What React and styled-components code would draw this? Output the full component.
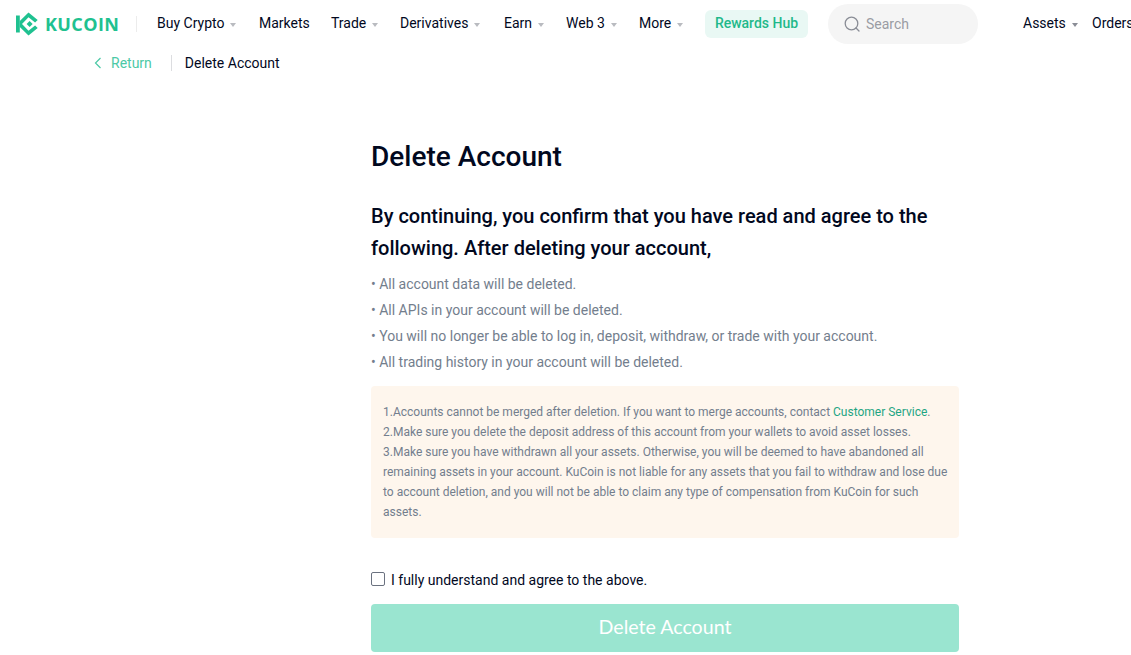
import React from 'react';
import styled, { createGlobalStyle } from 'styled-components';

const Global = createGlobalStyle`
  html, body { margin: 0; padding: 0; background: #fff; overflow: hidden; }
  body { font-family: Roboto, "Liberation Sans", sans-serif; color: #01081e; }
  * { box-sizing: border-box; }
`;

const Page = styled.div`
  width: 1131px;
  height: 655px;
  overflow: hidden;
`;

const Header = styled.header`
  display: flex;
  align-items: center;
  width: 1200px;
  height: 48px;
  padding-left: 16px;
  white-space: nowrap;
`;

const Logo = styled.div`
  display: flex;
  flex-shrink: 0;
  align-items: center;
  gap: 7px;
  width: 102px;
  color: #1fc190;
  svg { flex-shrink: 0; }
`;

const LogoText = styled.span`
  font-family: "Open Sans", sans-serif;
  font-size: 18px;
  font-weight: 700;
  letter-spacing: 0.4px;
  line-height: 1;
`;

const Divider = styled.span`
  flex-shrink: 0;
  width: 1px;
  height: 16px;
  background: #ececec;
  margin: 0 20px 0 18px;
`;

const Nav = styled.nav`
  display: flex;
  flex-shrink: 0;
  align-items: center;
  margin-bottom: 2px;
`;

const NavItem = styled.span`
  display: inline-flex;
  flex-shrink: 0;
  align-items: center;
  width: ${p => p.$w}px;
  font-size: 14px;
  font-weight: 400;
  color: #01081e;
  margin-bottom: ${p => p.$lift ? 2 : 0}px;
`;

const Caret = styled.span`
  display: inline-block;
  margin: 3px 0 0 6px;
  border-left: 3.5px solid transparent;
  border-right: 3.5px solid transparent;
  border-top: 4px solid ${p => p.$dark ? '#8a8d96' : '#b9bbc0'};
`;

const Rewards = styled.span`
  display: inline-flex;
  flex-shrink: 0;
  align-items: center;
  justify-content: center;
  width: 103px;
  height: 28px;
  padding-bottom: 2px;
  border-radius: 6px;
  background: #e9f8f4;
  color: #1fb98a;
  font-size: 14px;
  font-weight: 500;
`;

const SearchBox = styled.div`
  display: flex;
  flex-shrink: 0;
  align-items: center;
  gap: 6px;
  width: 150px;
  height: 40px;
  margin: 0 45px 0 20px;
  padding-left: 16px;
  border-radius: 20px;
  background: #f5f5f5;
  color: #9a9ca3;
  font-size: 14px;
  font-weight: 400;
`;

const Crumbs = styled.div`
  display: flex;
  align-items: center;
  height: 30px;
  padding-left: 93px;
`;

const Back = styled.span`
  display: inline-flex;
  align-items: center;
  gap: 8px;
  color: #4cc9a6;
  font-size: 14px;
`;

const CrumbLine = styled.span`
  width: 1px;
  height: 16px;
  background: #dcdde0;
  margin: 0 12.5px 0 19.5px;
`;

const CrumbTitle = styled.span`
  font-size: 14px;
  color: #01081e;
`;

const Main = styled.main`
  width: 588px;
  margin: 0 0 0 371px;
  padding-top: 61px;
`;

const Title = styled.h1`
  margin: 0 0 25px;
  font-size: 28px;
  font-weight: 500;
  line-height: 36px;
  color: #01081e;
`;

const Lead = styled.h2`
  margin: 0 0 7px;
  font-size: 20px;
  font-weight: 500;
  line-height: 32px;
  color: #01081e;
`;

const List = styled.ul`
  margin: 0 0 11px;
  padding: 0;
  list-style: none;
`;

const ListItem = styled.li`
  font-size: 14px;
  line-height: 26px;
  color: #737e8d;
`;

const Notice = styled.div`
  height: 152px;
  padding: 16px 8px 16px 12px;
  border-radius: 4px;
  background: #fef6ed;
  font-size: 12px;
  line-height: 20px;
  color: #737e8d;
`;

const NoticeLine = styled.div``;

const Link = styled.span`
  color: #1fa583;
`;

const Agree = styled.label`
  display: flex;
  align-items: center;
  gap: 6px;
  margin-top: 32px;
  height: 20px;
  font-size: 14px;
  color: #01081e;
`;

const Box = styled.span`
  width: 14px;
  height: 14px;
  border: 1px solid #6b7280;
  border-radius: 2px;
  background: #fff;
  margin-top: -2px;
`;

const Submit = styled.button`
  display: block;
  width: 100%;
  height: 48px;
  margin-top: 14px;
  padding: 0 0 3px;
  border: 0;
  border-radius: 4px;
  background: #9ae5d0;
  color: #fff;
  font-family: Lato, sans-serif;
  font-size: 19.6px;
  font-weight: 400;
`;

const LogoMark = () => (
  <svg width="22" height="24" viewBox="0 0 22 24" fill="currentColor">
    <path d="M0 3.5h3.8v17H0z" />
    <path d="M3.8 9 12.5.5 21.7 8l-2.6 2.6-6.6-5.3L6 12l6.5 6.7 6.6-5.3 2.6 2.6-9.2 7.5L3.8 15z" />
    <path d="M13.6 9 16.6 12l-3 3-3-3z" />
  </svg>
);

const nav = [
  ['Buy Crypto', 102, true],
  ['Markets', 72, false],
  ['Trade', 69, true],
  ['Derivatives', 104, true],
  ['Earn', 62, true],
  ['Web 3', 73, true],
  ['More', 66, true],
];

export default function App() {
  return (
    <Page>
      <Global />
      <Header>
        <Logo>
          <LogoMark />
          <LogoText>KUCOIN</LogoText>
        </Logo>
        <Divider />
        <Nav>
          {nav.map(([label, w, caret]) => (
            <NavItem key={label} $w={w}>
              {label}
              {caret && <Caret />}
            </NavItem>
          ))}
        </Nav>
        <Rewards>Rewards Hub</Rewards>
        <SearchBox>
          <svg width="16" height="16" viewBox="0 0 16 16" fill="none" stroke="#8a8d96" strokeWidth="1.3">
            <circle cx="7.5" cy="7.5" r="6.3" />
            <path d="M12 12l3 3" strokeLinecap="round" />
          </svg>
          Search
        </SearchBox>
        <NavItem $w={69} $lift>Assets<Caret $dark /></NavItem>
        <NavItem $w={60} $lift>Orders</NavItem>
      </Header>
      <Crumbs>
        <Back>
          <svg width="10" height="12" viewBox="0 0 10 12" fill="none" stroke="#4cc9a6" strokeWidth="1.2">
            <path d="M7.5 1 2.5 6l5 5" />
          </svg>
          Return
        </Back>
        <CrumbLine />
        <CrumbTitle>Delete Account</CrumbTitle>
      </Crumbs>
      <Main>
        <Title>Delete Account</Title>
        <Lead>By continuing, you confirm that you have read and agree to the following. After deleting your account,</Lead>
        <List>
          <ListItem>• All account data will be deleted.</ListItem>
          <ListItem>• All APIs in your account will be deleted.</ListItem>
          <ListItem>• You will no longer be able to log in, deposit, withdraw, or trade with your account.</ListItem>
          <ListItem>• All trading history in your account will be deleted.</ListItem>
        </List>
        <Notice>
          <NoticeLine>1.Accounts cannot be merged after deletion. If you want to merge accounts, contact <Link>Customer Service</Link>.</NoticeLine>
          <NoticeLine>2.Make sure you delete the deposit address of this account from your wallets to avoid asset losses.</NoticeLine>
          <NoticeLine>3.Make sure you have withdrawn all your assets. Otherwise, you will be deemed to have abandoned all remaining assets in your account. KuCoin is not liable for any assets that you fail to withdraw and lose due to account deletion, and you will not be able to claim any type of compensation from KuCoin for such assets.</NoticeLine>
        </Notice>
        <Agree>
          <Box />
          I fully understand and agree to the above.
        </Agree>
        <Submit>Delete Account</Submit>
      </Main>
    </Page>
  );
}
